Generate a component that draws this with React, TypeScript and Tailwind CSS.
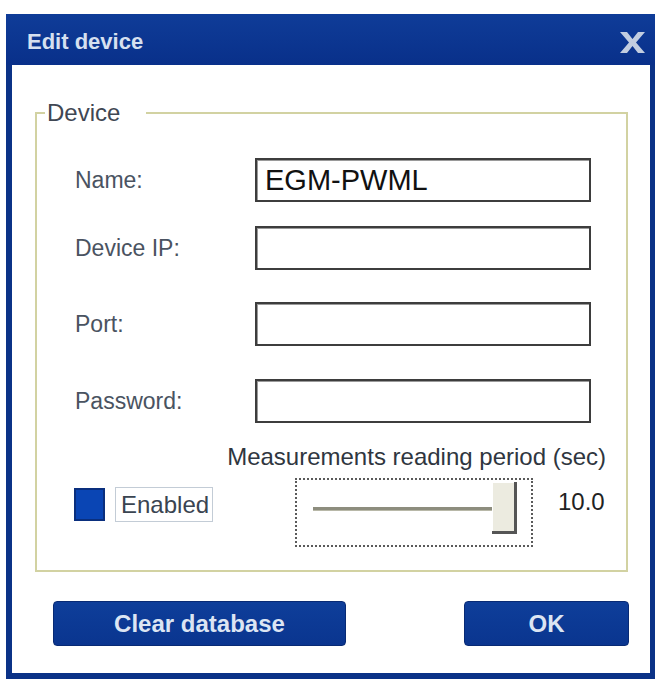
import React from "react";

const font = "font-['Liberation_Sans',Arial,sans-serif]";

function Field({ label, value, mt }: { label: string; value?: string; mt: string }) {
  return (
    <div className={`flex items-center ${mt}`}>
      <div className="w-[180px] text-[23px] leading-[28px] text-[#4a5361]">{label}</div>
      <div className="w-[336px] h-[44px] border-2 border-[#3d3d3d] shadow-[inset_1px_1px_0_#9a9a9a] bg-white flex items-center pl-[8px] text-[29px] leading-none text-[#111]">
        {value}
      </div>
    </div>
  );
}

export default function App() {
  return (
    <div className={`w-[659px] h-[679px] bg-white ${font}`}>
      <div className="pt-[14px] pl-[6px]">
        <div className="w-[649px] h-[665px] flex flex-col bg-[#0b3287] shadow-[inset_0_1px_0_#5b7cc0]">
          {/* Title bar */}
          <div className="h-[51px] flex items-center justify-between pt-[4px] pl-[21px] pr-[10px] bg-gradient-to-b from-[#0f3c98] to-[#09308a]">
            <span className="text-[22px] font-bold text-[#d6e0f0]">Edit device</span>
            <svg width="25" height="21" viewBox="0 0 25 21" className="mt-[2px]">
              <polygon
                points="0,0 7,0 12.5,7 18,0 25,0 16,10.5 25,21 18,21 12.5,14 7,21 0,21 9,10.5"
                fill="#c2cde0"
              />
            </svg>
          </div>
          {/* Body */}
          <div className="flex-1 ml-[6px] mr-[5px] mb-[6px] bg-white flex flex-col">
            {/* Group box */}
            <div className="relative mt-[47px] ml-[23px] w-[593px] h-[460px] border-2 border-[#d2d2a2] pl-[38px] pr-[20px]">
              <span className="absolute left-[8px] top-[-15px] bg-white pl-[2px] pr-[26px] text-[24px] leading-[28px] text-[#3f4753]">
                Device
              </span>
              <Field label="Name:" value="EGM-PWML" mt="mt-[44px]" />
              <Field label="Device IP:" mt="mt-[24px]" />
              <Field label="Port:" mt="mt-[32px]" />
              <Field label="Password:" mt="mt-[33px]" />
              <div className="mt-[20px] text-right text-[24px] leading-[28px] text-[#2f3640]">
                Measurements reading period (sec)
              </div>
              <div className="mt-[7px] flex items-start">
                <div className="mt-[10px] -ml-[1px] w-[31px] h-[33px] bg-[#0a45b4] border-2 border-[#0a2f7e]" />
                <div className="mt-[9px] ml-[10px] w-[98px] h-[35px] border border-[#c3ccd6] flex items-center pl-[5px] text-[24px] leading-none text-[#3a4451]">
                  Enabled
                </div>
                <div className="ml-[82px] w-[238px] h-[69px] border-2 border-dotted border-[#5a5a5a] flex items-start">
                  <div className="mt-[27px] ml-[16px] w-[179px] h-[4px] bg-[#8d8d7e] border-b border-[#b8b8a8]" />
                  <div className="mt-[2px] w-[25px] h-[52px] bg-[#ecebe0] border-r-[3px] border-b-[3px] border-[#555] shadow-[inset_1px_1px_0_#ffffff]" />
                </div>
                <div className="mt-[10px] ml-[25px] text-[24px] leading-[28px] text-[#222]">10.0</div>
              </div>
            </div>
            {/* Buttons */}
            <div className="mt-[29px] flex justify-between pl-[41px] pr-[21px]">
              <button className="w-[293px] h-[45px] rounded-[4px] bg-gradient-to-b from-[#0e3e9a] to-[#0a358f] border border-[#082a74] text-[24px] font-bold text-[#dce5f3]">
                Clear database
              </button>
              <button className="w-[165px] h-[45px] rounded-[4px] bg-gradient-to-b from-[#0e3e9a] to-[#0a358f] border border-[#082a74] text-[24px] font-bold text-[#dce5f3]">
                OK
              </button>
            </div>
          </div>
        </div>
      </div>
    </div>
  );
}
